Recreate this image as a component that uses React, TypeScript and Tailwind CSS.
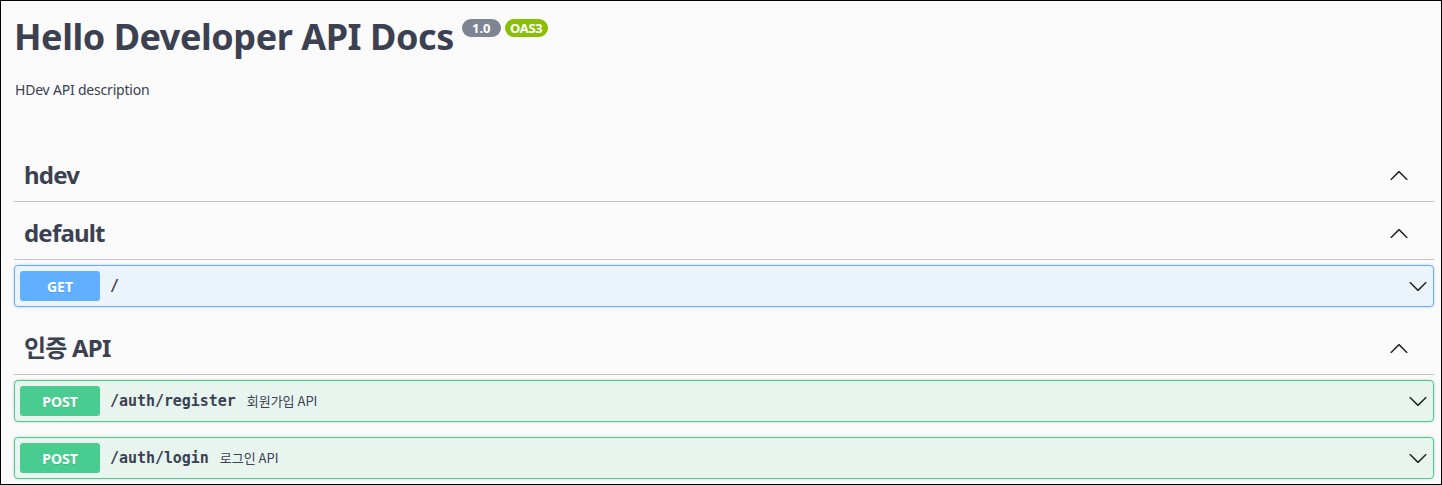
import React from 'react';

const ChevronUp = () => (
  <svg width="20" height="20" viewBox="0 0 20 20" className="shrink-0">
    <path
      fill="#222"
      d="M17.418 14.908c.272.268.709.268.979 0s.27-.701 0-.969l-7.908-7.83c-.27-.268-.707-.268-.979 0l-7.908 7.83c-.27.268-.27.701 0 .969.271.268.709.268.979 0L10 7.767l7.418 7.141z"
    />
  </svg>
);

const ChevronDown = () => (
  <svg width="20" height="20" viewBox="0 0 20 20" className="shrink-0">
    <path
      fill="#222"
      d="M17.418 6.109c.272-.268.709-.268.979 0s.271.701 0 .969l-7.908 7.83c-.27.268-.707.268-.979 0l-7.908-7.83c-.27-.268-.27-.701 0-.969.271-.268.709-.268.979 0L10 13.25l7.418-7.141z"
    />
  </svg>
);

const TagHeader = ({ name }: { name: string }) => (
  <div className="flex items-center h-[53px] mb-[5px] pl-[10px] pr-[25px] border-b border-[#c1c3c7]">
    <h3 className="flex-1 text-[24px] font-bold tracking-[-0.8px] text-[#3b4151] leading-[32px]">{name}</h3>
    <ChevronUp />
  </div>
);

interface OpProps {
  method: 'GET' | 'POST';
  path: string;
  desc?: string;
}

const Operation = ({ method, path, desc }: OpProps) => {
  const isGet = method === 'GET';
  return (
    <div
      className={`flex items-center h-[42px] p-[5px] rounded-[4px] border shadow-[0_0_3px_rgba(0,0,0,0.19)] ${
        isGet ? 'mb-[15px] border-[#61affe] bg-[#ebf3fb]' : 'mb-[15px] border-[#49cc90] bg-[#e8f5ef]'
      }`}
    >
      <span
        className={`w-[80px] h-[30px] flex items-center justify-center rounded-[3px] text-white text-[14px] font-bold [text-shadow:0_1px_0_rgba(0,0,0,0.1)] ${
          isGet ? 'bg-[#61affe]' : 'bg-[#49cc90]'
        }`}
      >
        {method}
      </span>
      <span className="pl-[10px] pr-[11px] text-[15px] font-semibold tracking-[-0.05px] text-[#3b4151] font-['DejaVu_Sans_Mono',monospace]">
        {path}
      </span>
      <span className="flex-1 text-[13px] text-[#3b4151] font-['Noto_Sans_CJK_KR',sans-serif]">{desc}</span>
      <ChevronDown />
    </div>
  );
};

export default function App() {
  return (
    <div className="w-[1442px] h-[485px] overflow-hidden border border-black bg-[#fafafa] font-['Noto_Sans','Noto_Sans_CJK_KR',sans-serif] text-[#3b4151]">
      <div className="pl-[13px] pr-[7px] pt-[14px]">
        {/* Info */}
        <div className="flex items-start">
          <h2 className="text-[36px] font-bold leading-[44px] tracking-[-0.45px] text-[#3b4151]">Hello Developer API Docs</h2>
          <span className="ml-[8px] mt-[4px] w-[39px] h-[18px] flex items-center justify-center rounded-full bg-[#7d8492] text-white text-[13px] font-bold leading-none">
            1.0
          </span>
          <span className="ml-[4px] mt-[4px] w-[43px] h-[18px] flex items-center justify-center rounded-full bg-[#89bf04] text-white text-[13px] font-bold leading-none tracking-[-0.3px]">
            OAS3
          </span>
        </div>
        <p className="mt-[21px] pl-px text-[14px] leading-[20px] tracking-[-0.2px]">HDev API description</p>

        {/* Tags */}
        <div className="mt-[49px]">
          <TagHeader name="hdev" />
          <TagHeader name="default" />
          <Operation method="GET" path="/" />
          <TagHeader name="인증 API" />
          <Operation method="POST" path="/auth/register" desc="회원가입 API" />
          <Operation method="POST" path="/auth/login" desc="로그인 API" />
        </div>
      </div>
    </div>
  );
}
